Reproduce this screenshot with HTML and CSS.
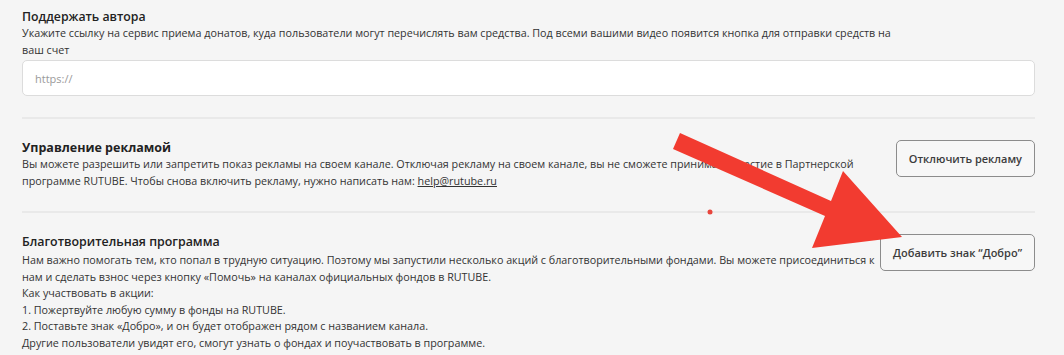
FILE: index.html
```
<!DOCTYPE html>
<html lang="ru">
<head>
    <meta charset="UTF-8">
    <title>Настройки канала</title>
    <link rel="stylesheet" href="styles.css">
</head>
<body>

<div class="page">
    <div class="block">
        <h3 class="title">Поддержать автора</h3>
        <p class="desc wide">Укажите ссылку на сервис приема донатов, куда пользователи могут перечислять вам средства. Под всеми вашими видео появится кнопка для отправки средств на ваш счет</p>
        <input type="text" class="field" placeholder="https://"/>
    </div>

    <div class="line"></div>

    <div class="block row ads">
        <div class="text">
            <h3 class="title big">Управление рекламой</h3>
            <p class="desc">Вы можете разрешить или запретить показ рекламы на своем канале. Отключая рекламу на своем канале, вы не сможете принимать участие в Партнерской программе RUTUBE. Чтобы снова включить рекламу, нужно написать нам: <a href="#">help@rutube.ru</a></p>
        </div>
        <button class="button">Отключить рекламу</button>
    </div>

    <div class="line"></div>

    <div class="block row charity">
        <div class="text">
            <h3 class="title light">Благотворительная программа</h3>
            <p class="desc">Нам важно помогать тем, кто попал в трудную ситуацию. Поэтому мы запустили несколько акций с благотворительными фондами. Вы можете присоединиться к нам и сделать взнос через кнопку «Помочь» на каналах официальных фондов в RUTUBE.<br>
                Как участвовать в акции:<br>
                1. Пожертвуйте любую сумму в фонды на RUTUBE.<br>
                2. Поставьте знак «Добро», и он будет отображен рядом с названием канала.<br>
                Другие пользователи увидят его, смогут узнать о фондах и поучаствовать в программе.</p>
        </div>
        <button class="button">Добавить знак “Добро”</button>
    </div>
</div>

<!-- red pointer drawn over the screenshot -->
<svg class="pointer" width="1064" height="355" viewBox="0 0 1064 355">
    <polygon fill="#f23b30" points="680,133 673,149 825,216 812,248 902,237 843,171 831,201"/>
    <circle fill="#e8453c" cx="710" cy="212" r="2.5"/>
</svg>

</body>
</html>
```

FILE: styles.css
```
body {
    margin: 0;
    background-color: #f5f5f5;
    font-family: "Open Sans", "Noto Sans", sans-serif;
    color: #2b2b2b;
}

.page {
    width: 1013px;
    padding: 9px 0 0 22px;
}

.block {
    padding-bottom: 21px;
}

.row {
    display: flex;
    align-items: flex-start;
    gap: 2px;
    padding-top: 21px;
}

.text {
    flex: 1;
}

.title {
    margin: 0;
    color: #222;
    font-size: 12.3px;
    font-weight: 600;
    line-height: 16px;
}

.title.big {
    font-size: 12.5px;
    font-weight: 700;
}

.title.light {
    font-size: 12.4px;
    font-weight: 600;
}

.desc {
    margin: 0;
    font-size: 10.75px;
    line-height: 17px;
    color: #333;
}

.desc.wide {
    max-width: 880px;
}

.desc a {
    color: #333;
}

.charity .desc {
    line-height: 16.5px;
    margin-top: 2px;
}

.field {
    box-sizing: border-box;
    width: 100%;
    height: 36px;
    margin-top: 1px;
    padding: 0 12px;
    border: 1px solid #dcdcdc;
    border-radius: 5px;
    background-color: #fff;
    font-family: "Open Sans", sans-serif;
    font-size: 11px;
}

.field::placeholder {
    color: #9a9a9a;
}

.line {
    height: 2px;
    background-color: #e9e9e9;
}

.button {
    flex: none;
    height: 37px;
    padding: 0 12px;
    border: 1px solid #8c8c8c;
    border-radius: 5px;
    background-color: #f7f7f7;
    color: #3c3c3c;
    font-family: "Open Sans", sans-serif;
    font-size: 11px;
    font-weight: 600;
}

.pointer {
    position: absolute;
    left: 0;
    top: 0;
    pointer-events: none;
}
```
